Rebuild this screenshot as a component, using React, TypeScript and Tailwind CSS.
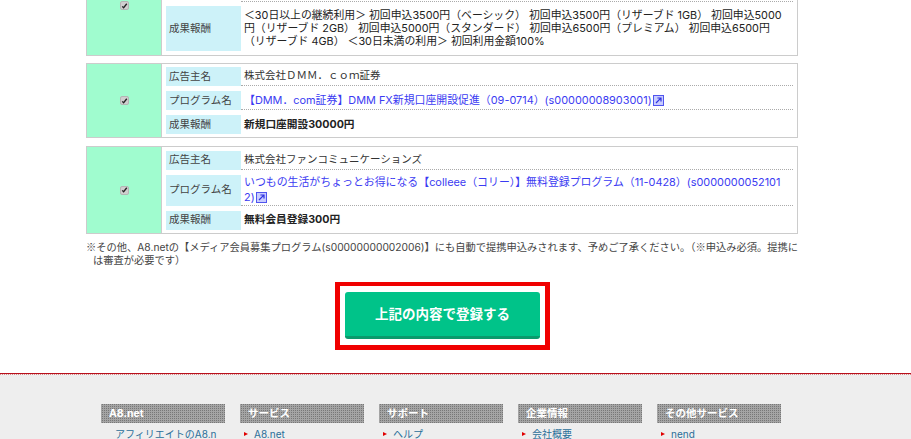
const font = { fontFamily: '"Inter", "Noto Sans CJK JP", sans-serif' };

function Check() {
  return (
    <span className="flex h-[9px] w-[9px] items-center justify-center rounded-[2px] border border-[#b5b5b5] bg-[#cfcfcf]">
      <svg width="8" height="8" viewBox="0 0 8 8" fill="none">
        <path d="M1.4 4.4 L3 6 L6.6 1.4" stroke="#222" strokeWidth="1.5" />
      </svg>
    </span>
  );
}

function Ext() {
  return (
    <svg className="ml-px inline-block align-[-2px]" width="11" height="11" viewBox="0 0 11 11" fill="none">
      <rect x="0.5" y="0.5" width="10" height="10" fill="#c8ccff" stroke="#5055ee" />
      <path d="M3 8 L7.6 3.4 M4.4 3 H8 V6.6" stroke="#2f34e0" strokeWidth="1.2" />
    </svg>
  );
}

function Row({ label, last, tall, children }: { label: string; last?: boolean; tall?: string; children: React.ReactNode }) {
  return (
    <div className={`flex ${last ? "" : "mb-[5px]"}`}>
      <div className={`flex w-[75px] shrink-0 items-center bg-[#cdf2f9] pl-[3px] text-[#444] ${tall ?? "h-[19px]"}`}>{label}</div>
      <div className={`flex min-w-0 flex-1 items-center pl-[3px] ${last ? "" : "border-b border-dotted border-[#aaa]"}`}>
        <div className="w-full">{children}</div>
      </div>
    </div>
  );
}

function Card({ children, h }: { children: React.ReactNode; h: string }) {
  return (
    <div className={`flex w-[712px] shrink-0 border border-[#ccc] ${h}`}>
      <div className="flex w-[75px] shrink-0 items-center justify-center border-r border-[#ccc] bg-[#a0fccf]">
        <Check />
      </div>
      <div className="flex min-w-0 flex-1 flex-col justify-center pl-1 pr-[4px]">{children}</div>
    </div>
  );
}

const columns = [
  { title: "A8.net", link: "アフィリエイトのA8.net" },
  { title: "サービス", link: "A8.net" },
  { title: "サポート", link: "ヘルプ" },
  { title: "企業情報", link: "会社概要" },
  { title: "その他サービス", link: "nend" },
];

export default function App() {
  return (
    <div className="h-[439px] w-[911px] overflow-hidden bg-white text-[10.5px] leading-[14px] text-[#333]" style={font}>
      <div className="ml-[86px] -mt-[45px] flex flex-col">
        <div className="mb-[7px] flex h-[101px] w-[712px] shrink-0 border border-[#ccc]">
          <div className="flex w-[75px] shrink-0 items-center justify-center border-r border-[#ccc] bg-[#a0fccf]">
            <Check />
          </div>
          <div className="flex min-w-0 flex-1 flex-col justify-end pb-[4px] pl-1 pr-[4px]">
            <div className="mb-[4px] ml-[75px] h-0 border-b border-dotted border-[#aaa]" />
            <Row label="成果報酬" last tall="h-[45px]">
              <div className="whitespace-nowrap text-[10.85px] leading-[13px] text-[#222]">
                ＜30日以上の継続利用＞ 初回申込3500円（ベーシック） 初回申込3500円（リザーブド 1GB） 初回申込5000<br />
                円（リザーブド 2GB） 初回申込5000円（スタンダード） 初回申込6500円（プレミアム） 初回申込6500円<br />
                （リザーブド 4GB） ＜30日未満の利用＞ 初回利用金額100%
              </div>
            </Row>
          </div>
        </div>

        <div className="mb-[8px]">
          <Card h="h-[75px]">
            <Row label="広告主名"><span>株式会社ＤＭＭ．ｃｏｍ証券</span></Row>
            <Row label="プログラム名">
              <span className="text-[10.9px] text-[#3b3bf2]">【DMM．com証券】DMM FX新規口座開設促進（09-0714）(s00000008903001)<Ext /></span>
            </Row>
            <Row label="成果報酬" last><span className="text-[10.7px] font-bold text-[#222]">新規口座開設30000円</span></Row>
          </Card>
        </div>

        <Card h="h-[88px]">
          <Row label="広告主名"><span>株式会社ファンコミュニケーションズ</span></Row>
          <Row label="プログラム名" tall="h-[31px]">
            <span className="whitespace-nowrap text-[10.9px] text-[#3b3bf2]">いつもの生活がちょっとお得になる【colleee（コリー）】無料登録プログラム（11-0428）(s0000000052101<br />2)<Ext /></span>
          </Row>
          <Row label="成果報酬" last><span className="text-[10.7px] font-bold text-[#222]">無料会員登録300円</span></Row>
        </Card>

        <p className="mt-[6px] w-[712px] whitespace-nowrap pl-[7px] -indent-[7px] text-[10.25px] leading-[13px] text-[#444]">
          <span className="font-['Noto_Sans_CJK_JP']">※</span>その他、A8.netの【メディア会員募集プログラム(s00000000002006)】にも自動で提携申込みされます、予めご了承ください。（<span className="font-['Noto_Sans_CJK_JP']">※</span>申込み必須。提携に<br />
          は審査が必要です）
        </p>

        <div className="mt-[15px] flex w-[713px] justify-center">
          <div className="border-x-[5px] border-t-[4px] border-b-[5px] border-[#f00000] bg-white px-[5px] py-[6px]">
            <button className="flex h-[47px] w-[195px] items-center justify-center rounded-[3px] border-b-[3px] border-[#0a9a6c] bg-[#00c389] text-[13.5px] font-bold text-white">
              上記の内容で登録する
            </button>
          </div>
        </div>
      </div>

      <footer className="mt-[23px] h-[70px] border-t border-[#b8101c] bg-[#eee]">
        <div className="border-t border-dotted border-[#d98a8a] pl-[101px] pt-[29px]">
          <div className="flex gap-[15px]">
            {columns.map((c) => (
              <div key={c.title} className="w-[124px]">
                <div className="flex h-[19px] items-center bg-[conic-gradient(#777_25%,#a4a4a4_0)] bg-[length:2px_2px] pl-2 font-bold text-white">
                  {c.title}
                </div>
                <div className="mt-[4px] flex items-center pl-[4px] text-[10px] text-[#2a6f99]">
                  <span className="mr-[6px] h-0 w-0 shrink-0 border-y-[2.5px] border-l-[4px] border-y-transparent border-l-[#e00000]" />
                  <span className="w-[103px] break-all">{c.link}</span>
                </div>
              </div>
            ))}
          </div>
        </div>
      </footer>
    </div>
  );
}
